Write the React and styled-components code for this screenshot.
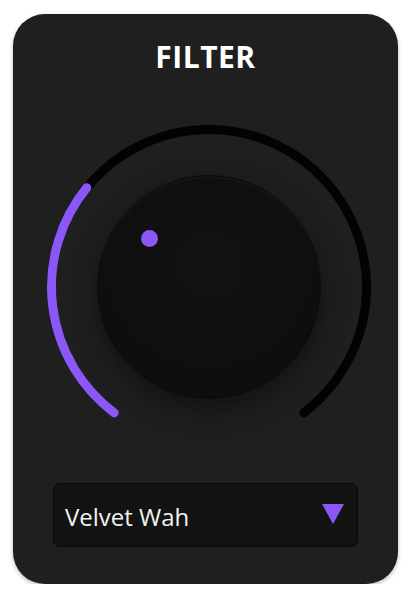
import React from "react";
import styled, { createGlobalStyle } from "styled-components";

const GlobalStyle = createGlobalStyle`
  html, body { margin: 0; padding: 0; background: #ffffff; }
  body { font-family: "Open Sans", "Noto Sans", sans-serif; }
  * { box-sizing: border-box; }
`;

const Card = styled.div`
  margin: 14px 0 0 13px;
  width: 385px;
  height: 570px;
  border-radius: 32px;
  background: #1f1f1f;
  box-shadow: 0 2px 4px rgba(0, 0, 0, 0.25);
  display: flex;
  flex-direction: column;
  align-items: center;
  padding-top: 23px;
`;

const Title = styled.h1`
  margin: 0;
  font-family: "Open Sans", "Noto Sans", sans-serif;
  font-weight: 700;
  font-size: 30px;
  line-height: 40px;
  letter-spacing: 0.5px;
  color: #ffffff;
`;

const KnobArea = styled.div`
  position: relative;
  width: 340px;
  height: 340px;
  margin-top: 40px;
  margin-left: 7px;
  display: flex;
  align-items: center;
  justify-content: center;
`;

const Ring = styled.svg`
  position: absolute;
  inset: 0;
`;

const Knob = styled.div`
  position: relative;
  width: 224px;
  height: 224px;
  border-radius: 50%;
  background: radial-gradient(circle at 50% 40%, #121212 0%, #0e0e0e 70%, #0c0c0c 100%);
  border: 1px solid #0a0a0a;
  box-shadow: 0 10px 28px rgba(0, 0, 0, 0.45), 0 0 40px rgba(255, 255, 255, 0.015),
    inset 0 2px 2px rgba(255, 255, 255, 0.035);
`;

const Dot = styled.div`
  position: absolute;
  width: 17px;
  height: 17px;
  margin: -8.5px 0 0 -8.5px;
  border-radius: 50%;
  background: #8b57f6;
`;

const Select = styled.div`
  margin-top: 26px;
  width: 305px;
  height: 64px;
  border-radius: 7px;
  background: #131313;
  border: 1px solid #070707;
  display: flex;
  align-items: center;
  justify-content: space-between;
  padding: 0 13px 0 11px;
`;

const SelectLabel = styled.span`
  font-family: "Open Sans", "Noto Sans", sans-serif;
  font-size: 24px;
  color: #f2f2f2;
  padding-top: 2px;
`;

const Caret = styled.svg`
  width: 22px;
  height: 20px;
  margin-top: -3px;
`;

const PURPLE = "#8b57f6";
const C = 170;
const R = 157.5;
const START = -143;
const END = 143;

function pt(deg, r = R) {
  const a = (deg * Math.PI) / 180;
  return [C + r * Math.sin(a), C - r * Math.cos(a)];
}

function arc(from, to) {
  const [x1, y1] = pt(from);
  const [x2, y2] = pt(to);
  const large = to - from > 180 ? 1 : 0;
  return `M ${x1} ${y1} A ${R} ${R} 0 ${large} 1 ${x2} ${y2}`;
}

export default function App() {
  const value = 0.322;
  const angle = START + (END - START) * value;
  const rad = (angle * Math.PI) / 180;
  const dotX = 112 + 77 * Math.sin(rad);
  const dotY = 112 - 77 * Math.cos(rad);

  return (
    <>
      <GlobalStyle />
      <Card>
        <Title>FILTER</Title>
        <KnobArea>
          <Ring width="340" height="340" viewBox="0 0 340 340">
            <path d={arc(START, END)} fill="none" stroke="#030303" strokeWidth="9" strokeLinecap="round" />
            <path d={arc(START, angle)} fill="none" stroke={PURPLE} strokeWidth="9" strokeLinecap="round" />
          </Ring>
          <Knob>
            <Dot style={{ left: dotX - 1, top: dotY - 1 }} />
          </Knob>
        </KnobArea>
        <Select>
          <SelectLabel>Velvet Wah</SelectLabel>
          <Caret viewBox="0 0 22 20">
            <polygon points="0,0 22,0 11,20" fill={PURPLE} />
          </Caret>
        </Select>
      </Card>
    </>
  );
}
